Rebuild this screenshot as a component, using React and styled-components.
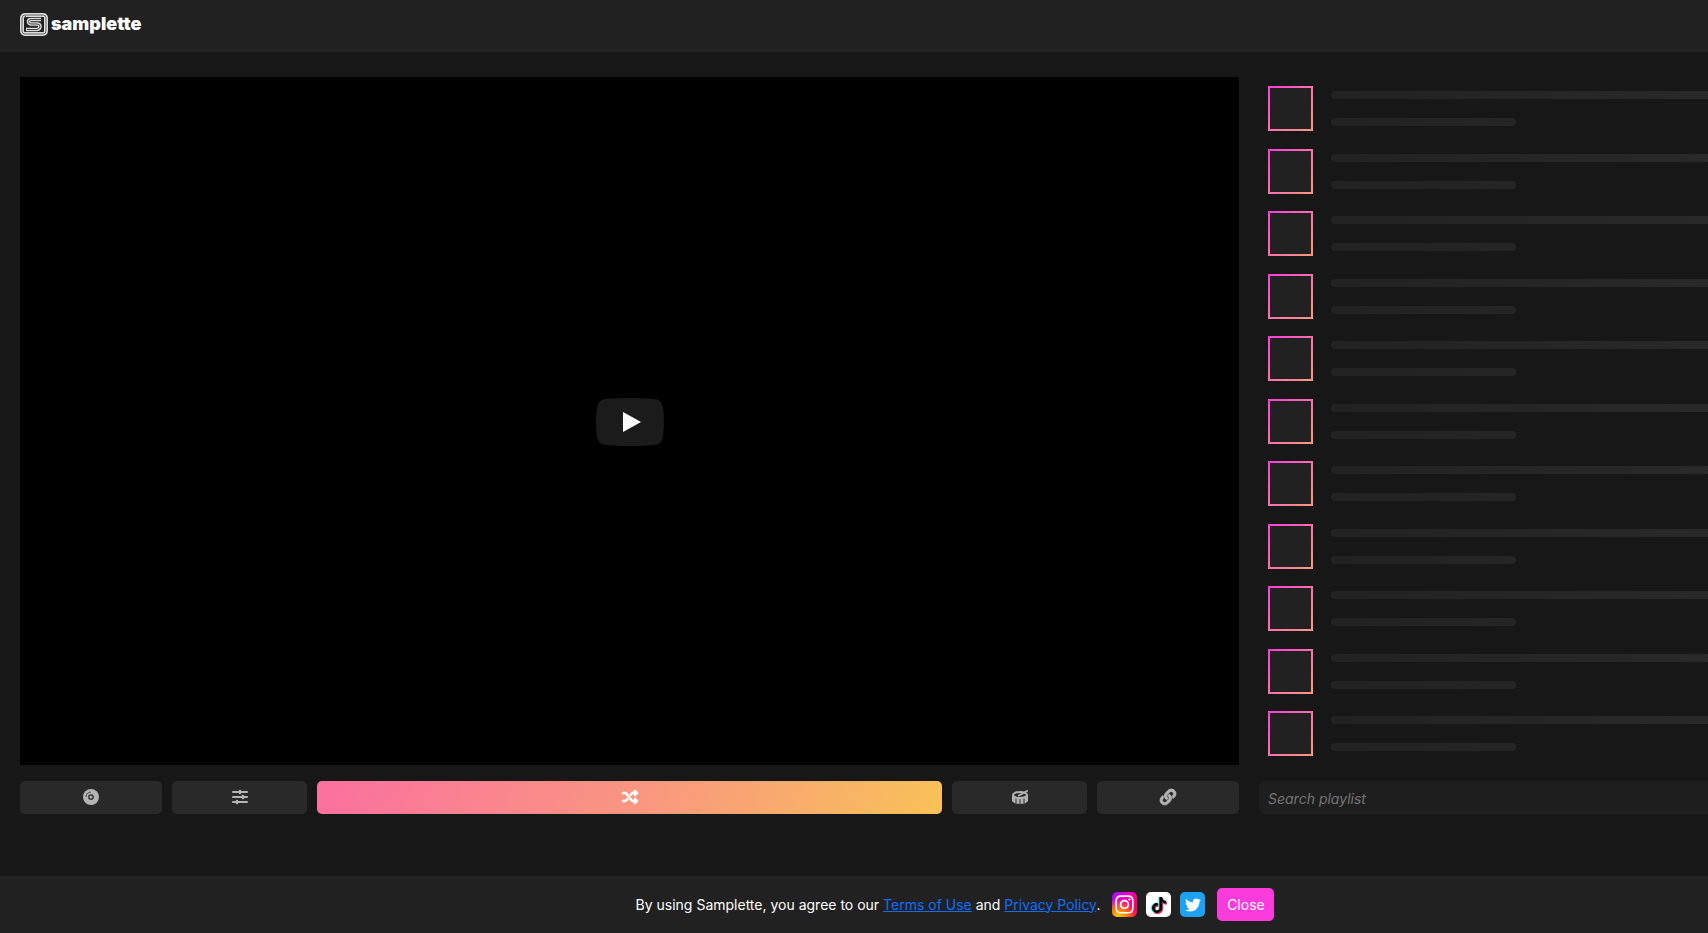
import React from "react";
import styled, { createGlobalStyle } from "styled-components";
import { FaLink, FaTwitter, FaInstagram } from "react-icons/fa";
import { FaShuffle, FaTiktok } from "react-icons/fa6";

const GlobalStyle = createGlobalStyle`
  * { box-sizing: border-box; }
  body {
    margin: 0;
    background: #171717;
    color: #fff;
    font-family: "Inter", "Liberation Sans", sans-serif;
    font-size: 14px;
    line-height: 24px;
  }
  button, input { font: inherit; }
`;

const Page = styled.div`
  display: flex;
  flex-direction: column;
  min-height: 100vh;
  overflow-x: hidden;
`;

const Header = styled.header`
  display: flex;
  height: 52px;
  padding: 13px 20px 0;
  background: #212121;
`;

const Brand = styled.a`
  display: flex;
  gap: 3px;
  height: 23px;
  color: #fff;
  text-decoration: none;
`;

const BrandName = styled.span`
  font-size: 18px;
  font-weight: 900;
  line-height: 22px;
`;

const Main = styled.main`
  display: grid;
  grid-template-columns: minmax(0, 1219fr) minmax(0, 449fr);
  gap: 16px 20px;
  padding: 25px 0 0 20px;
`;

const Player = styled.section`
  display: flex;
  align-items: center;
  justify-content: center;
  aspect-ratio: 1219 / 688;
  padding-top: 2px;
  background: #000;
`;

const PlayButton = styled.button`
  width: 68px;
  height: 48px;
  padding: 0;
  border: 0;
  background: none;
`;

const Playlist = styled.ul`
  display: flex;
  flex-direction: column;
  justify-content: space-between;
  margin: 0;
  padding: 9px 0 9px 9px;
  list-style: none;
`;

const PlaylistRow = styled.li`
  display: flex;
  gap: 18px;
`;

const Thumb = styled.div`
  flex: none;
  width: 45px;
  height: 45px;
  border: 2px solid transparent;
  background:
    linear-gradient(#212121, #212121) padding-box,
    linear-gradient(135deg, #ff3cdc, #ff6fae 50%, #ff9a7b) border-box;
`;

const Lines = styled.div`
  display: flex;
  flex: 1;
  flex-direction: column;
  gap: 19px;
  padding-top: 5px;
`;

const Line = styled.div`
  width: ${(p) => (p.$short ? "49%" : "100%")};
  height: 8px;
  border-radius: ${(p) => (p.$short ? "4px" : "4px 0 0 4px")};
  background: linear-gradient(90deg, #222, ${(p) => (p.$short ? "#252525" : "#292929")});
`;

const Controls = styled.div`
  display: grid;
  grid-template-columns: 142fr 135fr 625fr 135fr 142fr;
  gap: 10px;
`;

const ControlButton = styled.button`
  display: flex;
  align-items: center;
  justify-content: center;
  height: 33px;
  padding: 0 0 1px;
  border: 0;
  border-radius: 5px;
  font-size: 16px;
  color: ${(p) => (p.$primary ? "#fff" : "#b4b4b4")};
  background: ${(p) =>
    p.$primary ? "linear-gradient(110deg, #fa709f, #f99581 50%, #f8c257)" : "#292929"};
`;

const BoldLink = styled(FaLink)`
  stroke: currentColor;
  stroke-width: 24px;
  overflow: visible;
`;

const BoldShuffle = styled(FaShuffle)`
  stroke: currentColor;
  stroke-width: 20px;
  overflow: visible;
`;

const Search = styled.input`
  width: 100%;
  height: 33px;
  padding: 1px 9px 0;
  border: 0;
  border-radius: 5px 0 0 5px;
  background: #1e1e1e;
  color: #fff;
  &::placeholder {
    color: #757575;
    font-style: italic;
    opacity: 1;
  }
`;

const Footer = styled.footer`
  display: flex;
  align-items: center;
  justify-content: center;
  gap: 12px;
  height: 57px;
  margin-top: auto;
  padding-left: 202px;
  background: #212121;
`;

const Notice = styled.p`
  margin: 0;
  white-space: nowrap;
`;

const TextLink = styled.a`
  color: #0d6efd;
`;

const Socials = styled.nav`
  display: flex;
  gap: 9px;
`;

const SocialLink = styled.a`
  display: flex;
  align-items: center;
  justify-content: center;
  width: 25px;
  height: 25px;
  border-radius: 5px;
  font-size: ${(p) => p.$size}px;
  color: ${(p) => p.$color};
  background: ${(p) => p.$bg};
`;

const TiktokIcon = styled(FaTiktok)`
  filter: drop-shadow(-1px 0 0 #25f4ee) drop-shadow(1px 1px 0 #fe2c55);
`;

const CloseButton = styled.button`
  width: 57px;
  height: 33px;
  padding: 0;
  border: 0;
  border-radius: 5px;
  background: #fb3bdb;
  color: #fff;
`;

const instagramBg =
  "radial-gradient(circle at 25% 105%, #ffd600 0%, #ff8a00 25%, rgba(255, 0, 105, 0) 60%), linear-gradient(135deg, #8a10ff 0%, #f000c8 35%, #ff0060 75%)";

export default function App() {
  return (
    <Page>
      <GlobalStyle />
      <Header>
        <Brand href="#" aria-label="samplette">
          <svg width="28" height="23" viewBox="0 0 28 23" fill="none" strokeLinejoin="round">
            <rect x="2" y="2" width="24" height="19" rx="3" stroke="#dcdcdc" strokeWidth="4" />
            <rect x="2" y="2" width="24" height="19" rx="3" stroke="#666" strokeWidth="1" />
            <path d="M21 6.500H11Q8.500 6.500 8.500 8.500T11 11H17Q20 11 20 13.500T17 16.500H6" stroke="#dcdcdc" strokeWidth="3.500" />
            <path d="M5 3 7 5M21 6.500H11Q8.500 6.500 8.500 8.500T11 11H17Q20 11 20 13.500T17 16.500H7" stroke="#444" strokeWidth="1" />
          </svg>
          <BrandName>samplette</BrandName>
        </Brand>
      </Header>
      <Main>
        <Player aria-label="Video player">
          <PlayButton aria-label="Play">
            <svg width="68" height="48" viewBox="0 0 68 48">
              <path
                d="M66.52 7.74c-.78-2.93-2.49-5.41-5.42-6.19C55.79.13 34 0 34 0S12.21.13 6.9 1.55c-2.93.78-4.63 3.26-5.42 6.19C.06 13.05 0 24 0 24s.06 10.95 1.48 16.26c.78 2.93 2.49 5.41 5.42 6.19C12.21 47.87 34 48 34 48s21.79-.13 27.1-1.55c2.93-.78 4.64-3.26 5.42-6.19C67.94 34.95 68 24 68 24s-.06-10.95-1.48-16.26z"
                fill="#1b1b1b"
              />
              <path d="M45 24 27 14v20" fill="#fff" />
            </svg>
          </PlayButton>
        </Player>
        <Playlist aria-label="Playlist" aria-busy="true">
          {Array.from({ length: 11 }, (_, i) => (
            <PlaylistRow key={i}>
              <Thumb />
              <Lines>
                <Line />
                <Line $short />
              </Lines>
            </PlaylistRow>
          ))}
        </Playlist>
        <Controls>
          <ControlButton aria-label="Sample">
            <svg width="16" height="16" viewBox="0 0 16 16" fill="none">
              <circle cx="8" cy="8" r="8" fill="currentColor" />
              <circle cx="8" cy="8" r="2.200" stroke="#292929" strokeWidth="1.300" />
              <path d="M3 8A5 5 0 0 1 8 3" stroke="#292929" strokeWidth="0.800" />
            </svg>
          </ControlButton>
          <ControlButton aria-label="Filters">
            <svg width="16" height="16" viewBox="0 0 16 16" fill="none" stroke="currentColor" strokeLinecap="round">
              <path d="M1 3H15M1 8H15M1 13H15" strokeWidth="2" />
              <path d="M8 2V4M11 7V9M5 12V14" strokeWidth="2.500" />
            </svg>
          </ControlButton>
          <ControlButton $primary aria-label="Shuffle"><BoldShuffle /></ControlButton>
          <ControlButton aria-label="Drums">
            <svg width="16" height="16" viewBox="0 0 16 16" fill="none" stroke="currentColor" strokeLinecap="round">
              <path d="M0 6V12Q2 15 8 15T16 12V6Q13 9 8 9T0 6Z" fill="currentColor" stroke="none" />
              <ellipse cx="8" cy="6" rx="7" ry="3" strokeWidth="2" />
              <path d="M7 6.500 15 2" strokeWidth="2" />
              <path d="M4 10V14M8 10.500V15M12 10V14" stroke="#292929" strokeWidth="1" />
            </svg>
          </ControlButton>
          <ControlButton aria-label="Copy link"><BoldLink /></ControlButton>
        </Controls>
        <Search type="search" placeholder="Search playlist" aria-label="Search playlist" />
      </Main>
      <Footer>
        <Notice>
          By using Samplette, you agree to our <TextLink href="#terms">Terms of Use</TextLink> and{" "}
          <TextLink href="#privacy">Privacy Policy</TextLink>.
        </Notice>
        <Socials aria-label="Social media">
          <SocialLink href="#instagram" aria-label="Instagram" $size={21} $color="#fff" $bg={instagramBg}>
            <FaInstagram />
          </SocialLink>
          <SocialLink href="#tiktok" aria-label="TikTok" $size={16} $color="#000" $bg="#fff">
            <TiktokIcon />
          </SocialLink>
          <SocialLink href="#twitter" aria-label="Twitter" $size={16} $color="#fff" $bg="#1da1f2">
            <FaTwitter />
          </SocialLink>
        </Socials>
        <CloseButton>Close</CloseButton>
      </Footer>
    </Page>
  );
}
